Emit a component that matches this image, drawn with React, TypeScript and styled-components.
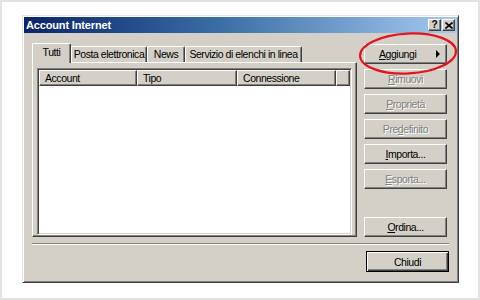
import React from "react";
import styled, { createGlobalStyle, css } from "styled-components";

const Global = createGlobalStyle`
  html, body { margin: 0; padding: 0; background: #fff; }
  * { box-sizing: border-box; }
`;

const Root = styled.div`
  position: relative;
  width: 480px;
  height: 300px;
  border: 2px solid #e2e2e2;
  background: #fff;
  padding: 13px 0 0 20px;
  font-family: "Liberation Sans", Arial, sans-serif;
  font-size: 10.5px;
  letter-spacing: -0.45px;
  color: #000;
`;

const Dialog = styled.div`
  width: 437px;
  height: 268px;
  display: flex;
  flex-direction: column;
  background: #d4d0c8;
  border: 1px solid;
  border-color: #e8e6e0 #404040 #404040 #e8e6e0;
  box-shadow: inset 1px 1px 0 #fff, inset -1px -1px 0 #808080;
  padding: 1px;
`;

const TitleBar = styled.div`
  height: 16px;
  display: flex;
  align-items: center;
  padding: 0 2px 0 2px;
  background: linear-gradient(90deg, #0a246a 0%, #3a6ea5 45%, #a6caf0 100%);
`;

const Title = styled.div`
  flex: 1;
  color: #fff;
  font-weight: bold;
  font-size: 11px;
  letter-spacing: -0.15px;
  line-height: 16px;
`;

const TitleButtons = styled.div`
  display: flex;
  gap: 1px;
`;

const TitleButton = styled.div`
  width: 13px;
  height: 12px;
  background: #d4d0c8;
  border: 1px solid;
  border-color: #fff #404040 #404040 #fff;
  box-shadow: inset -1px -1px 0 #808080;
  display: flex;
  align-items: center;
  justify-content: center;
  font-weight: bold;
  font-size: 10px;
  letter-spacing: 0;
  line-height: 10px;
`;

const Body = styled.div`
  flex: 1;
  display: flex;
  flex-direction: column;
  padding: 10px 8px 8px 8px;
`;

const MainRow = styled.div`
  display: flex;
  gap: 7px;
  height: 194px;
`;

const LeftCol = styled.div`
  width: 325px;
  display: flex;
  flex-direction: column;
`;

const TabStrip = styled.div`
  height: 19px;
  display: flex;
  align-items: flex-end;
  position: relative;
  z-index: 1;
`;

const Tab = styled.div<{ $w: number; $active?: boolean }>`
  width: ${(p) => p.$w}px;
  height: 16px;
  display: flex;
  align-items: center;
  justify-content: center;
  background: #d4d0c8;
  border-top: 1px solid #fff;
  border-left: 1px solid #fff;
  border-right: 1px solid #404040;
  border-radius: 2px 2px 0 0;
  box-shadow: inset -1px 0 0 #808080;
  padding-bottom: 1px;
  white-space: nowrap;
  ${(p) =>
    p.$active &&
    css`
      height: 20px;
      margin-bottom: -1px;
      padding-bottom: 3px;
    `}
`;

const Panel = styled.div`
  flex: 1;
  display: flex;
  flex-direction: column;
  border: 1px solid;
  border-color: #fff #404040 #404040 #fff;
  box-shadow: inset -1px -1px 0 #808080;
  padding: 5px 4px 1px 4px;
`;

const ListBox = styled.div`
  flex: 1;
  background: #fff;
  border: 1px solid;
  border-color: #808080 #fff #fff #808080;
  box-shadow: inset 1px 1px 0 #404040, inset -1px -1px 0 #d4d0c8;
  padding: 1px;
  display: flex;
  flex-direction: column;
`;

const Header = styled.div`
  display: flex;
  height: 16px;
`;

const HeaderCell = styled.div<{ $w?: number }>`
  ${(p) => (p.$w ? `width: ${p.$w}px;` : "flex: 1;")}
  height: 16px;
  background: #d4d0c8;
  border: 1px solid;
  border-color: #fff #404040 #404040 #fff;
  box-shadow: inset -1px -1px 0 #808080;
  padding-left: 5px;
  display: flex;
  align-items: center;
  white-space: nowrap;
`;

const RightCol = styled.div`
  width: 83px;
  display: flex;
  flex-direction: column;
  gap: 5px;
  padding-top: 1px;
`;

const Button = styled.div<{ $disabled?: boolean; $default?: boolean; $spread?: boolean }>`
  width: 83px;
  height: 20px;
  background: #d4d0c8;
  border: 1px solid;
  border-color: #fff #404040 #404040 #fff;
  box-shadow: inset -1px -1px 0 #808080;
  display: flex;
  align-items: center;
  justify-content: center;
  white-space: nowrap;
  ${(p) =>
    p.$disabled &&
    css`
      color: #808080;
      text-shadow: 1px 1px 0 #fff;
    `}
  ${(p) =>
    p.$spread &&
    css`
      justify-content: space-between;
      padding: 0 6px 0 14px;
    `}
  ${(p) =>
    p.$default &&
    css`
      height: 21px;
      border: 1px solid #000;
      box-shadow: inset 1px 1px 0 #fff, inset -1px -1px 0 #404040,
        inset -2px -2px 0 #808080;
    `}
`;

const PushDown = styled.div`
  margin-top: auto;
`;

const Arrow = styled.span`
  width: 0;
  height: 0;
  border-top: 4px solid transparent;
  border-bottom: 4px solid transparent;
  border-left: 4px solid #000;
`;

const Separator = styled.div`
  margin-top: 6px;
  height: 2px;
  border-top: 1px solid #808080;
  border-bottom: 1px solid #fff;
`;

const Footer = styled.div`
  margin-top: 6px;
  display: flex;
  justify-content: flex-end;
`;

const Highlight = styled.svg`
  position: absolute;
  left: 350px;
  top: 22px;
  width: 110px;
  height: 56px;
  pointer-events: none;
`;

export default function App() {
  return (
    <Root>
      <Global />
      <Dialog>
        <TitleBar>
          <Title>Account Internet</Title>
          <TitleButtons>
            <TitleButton>?</TitleButton>
            <TitleButton>
              <svg width="8" height="7" viewBox="0 0 8 7">
                <path d="M0.5 0.5 L7.5 6.5 M7.5 0.5 L0.5 6.5" stroke="#000" strokeWidth="1.6" />
              </svg>
            </TitleButton>
          </TitleButtons>
        </TitleBar>
        <Body>
          <MainRow>
            <LeftCol>
              <TabStrip>
                <Tab $w={39} $active>Tutti</Tab>
                <Tab $w={76}>Posta elettronica</Tab>
                <Tab $w={38}>News</Tab>
                <Tab $w={117}>Servizio di elenchi in linea</Tab>
              </TabStrip>
              <Panel>
                <ListBox>
                  <Header>
                    <HeaderCell $w={98}>Account</HeaderCell>
                    <HeaderCell $w={100}>Tipo</HeaderCell>
                    <HeaderCell $w={99}>Connessione</HeaderCell>
                    <HeaderCell />
                  </Header>
                </ListBox>
              </Panel>
            </LeftCol>
            <RightCol>
              <Button $spread>
                <span>
                  <u>A</u>ggiungi
                </span>
                <Arrow />
              </Button>
              <Button $disabled>
                <span>
                  <u>R</u>imuovi
                </span>
              </Button>
              <Button $disabled>
                <span>
                  <u>P</u>roprietà
                </span>
              </Button>
              <Button $disabled>
                <span>
                  Pre<u>d</u>efinito
                </span>
              </Button>
              <Button>
                <span>
                  <u>I</u>mporta...
                </span>
              </Button>
              <Button $disabled>
                <span>
                  <u>E</u>sporta...
                </span>
              </Button>
              <PushDown>
                <Button>
                  <span>
                    <u>O</u>rdina...
                  </span>
                </Button>
              </PushDown>
            </RightCol>
          </MainRow>
          <Separator />
          <Footer>
            <Button $default>Chiudi</Button>
          </Footer>
        </Body>
      </Dialog>
      <Highlight viewBox="0 0 110 56">
        <ellipse
          cx="56"
          cy="29.5"
          rx="48"
          ry="20"
          fill="none"
          stroke="#e3141c"
          strokeWidth="2.2"
          transform="rotate(-3 56 29.5)"
        />
      </Highlight>
    </Root>
  );
}
